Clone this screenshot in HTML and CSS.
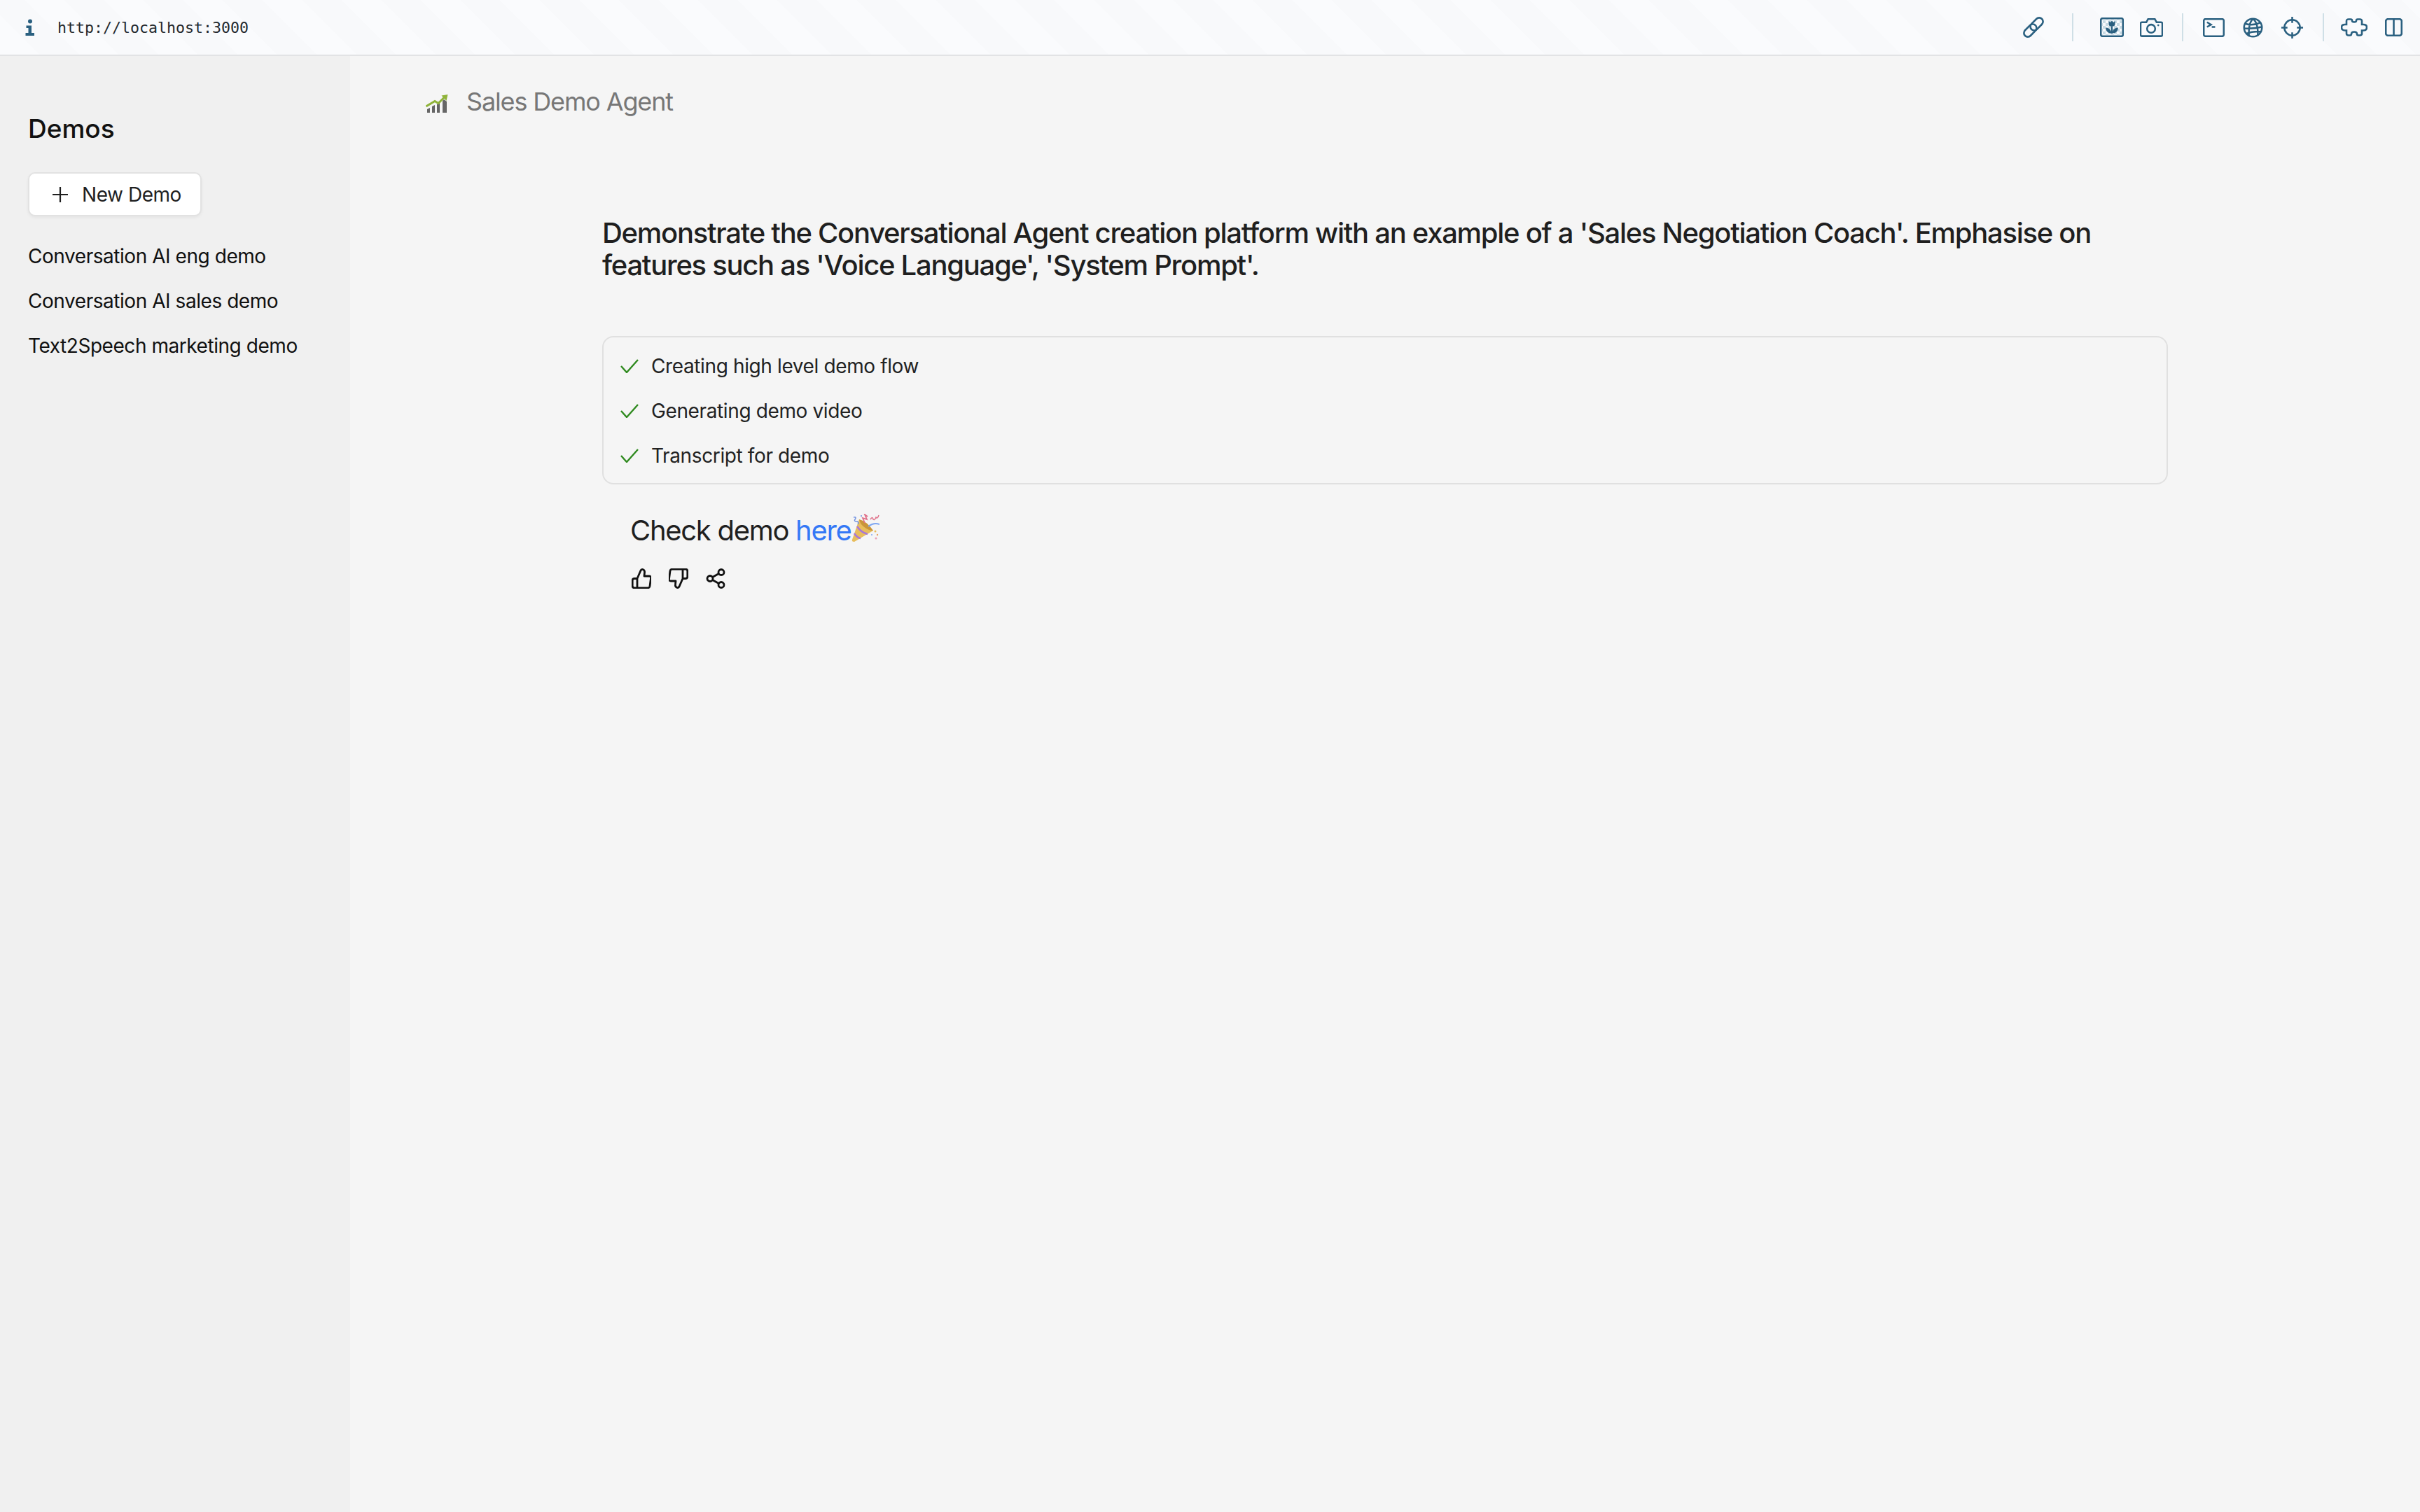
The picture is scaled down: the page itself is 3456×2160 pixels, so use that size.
FILE: index.html
```html
<!DOCTYPE html>
<html lang="en">
<head>
<meta charset="utf-8">
<title>Sales Demo Agent</title>
<link rel="stylesheet" href="styles.css">
</head>
<body>
<div class="toolbar">
  <svg class="info" viewBox="0 0 14 24"><circle cx="7" cy="3.5" r="3"/><path d="M1.5 9.5H9V20H13V24H0.5V20H4.5V13H1.5Z"/></svg>
  <span class="url">http://localhost:3000</span>
  <div class="tools">
    <span class="tool"><svg width="36" height="36" viewBox="0 0 36 36"><g transform="rotate(-45 18 18)"><rect x="1" y="12.500" width="21" height="11" rx="5.500"/><rect x="14" y="12.500" width="21" height="11" rx="5.500"/></g></svg></span>
    <span class="sep wide"></span>
    <span class="tool"><svg width="34" height="28" viewBox="0 0 34 28">
      <defs><pattern id="checker" width="8" height="8" patternUnits="userSpaceOnUse"><rect class="soft" width="4" height="4"/><rect class="soft" x="4" y="4" width="4" height="4"/></pattern></defs>
      <rect class="checker" x="3" y="3" width="28" height="22"/>
      <rect x="1.200" y="1.200" width="31.600" height="25.600" rx="2.500"/>
      <path class="fill" d="M12.500 5 L14.700 7 L17 4.500 L19.300 7 L21.500 5 V9.500 Q21.500 12.500 17 13 Q12.500 12.500 12.500 9.500Z"/>
      <path class="fill" d="M16 13H18V23H16ZM8 14.500Q14 14.500 16 20V22.500Q9 22.500 8 14.500ZM26 14.500Q20 14.500 18 20V22.500Q25 22.500 26 14.500Z"/>
    </svg></span>
    <span class="tool"><svg width="33" height="28" viewBox="0 0 34 28"><path d="M3 6.500H9.500L12 2H22L24.500 6.500H31Q33 6.500 33 8.500V25Q33 27 31 27H3Q1 27 1 25V8.500Q1 6.500 3 6.500Z"/><circle cx="16.500" cy="16" r="6"/><circle class="fill" cx="27" cy="11" r="1.400"/></svg></span>
    <span class="sep"></span>
    <span class="tool"><svg width="31" height="27" viewBox="0 0 32 28"><rect x="1.200" y="1.200" width="29.600" height="25.600" rx="2.500"/><path d="M6 6L12 9.500L6 13M13 13H18"/></svg></span>
    <span class="tool"><svg width="29" height="29" viewBox="0 0 30 30"><circle cx="15" cy="15" r="13.200"/><path d="M15 2Q8 8 9 28M15 2Q23 8 22 27M3 9Q15 13 27 7M2 16Q15 17 28 14M5 24Q15 20 27 21"/></svg></span>
    <span class="tool"><svg width="33" height="33" viewBox="0 0 34 34"><circle cx="17" cy="17" r="11.500"/><path d="M17 1V10M17 24V33M1 17H10M24 17H33"/></svg></span>
    <span class="sep"></span>
    <span class="tool"><svg width="38" height="26" viewBox="0 0 38 26"><path d="M8 9V4Q8 1.500 11 1.500H14Q16 1.500 16 3.500Q16 5.500 19 5.500Q22 5.500 22 3.500Q22 1.500 24 1.500H27Q30 1.500 30 4V9H32Q37 9 37 13Q37 17.500 32 17.500H30V22Q30 24.500 27 24.500H25Q23 24.500 23 22.500Q23 19.500 19 19.500Q15 19.500 15 22.500Q15 24.500 13 24.500H11Q8 24.500 8 22V17.500H6Q1 17.500 1 13Q1 9 6 9Z"/></svg></span>
    <span class="tool"><svg width="25" height="26" viewBox="0 0 25 26"><rect x="1.200" y="1.200" width="22.600" height="23.600" rx="3"/><path d="M12.500 1V25"/></svg></span>
  </div>
</div>
<div class="app">
  <aside class="sidebar">
    <h2 class="side-title">Demos</h2>
    <button class="new-demo" type="button">
      <svg class="plus" viewBox="0 0 24 24"><path d="M12 1V23M1 12H23"/></svg>
      New Demo
    </button>
    <ul class="demo-list">
      <li>Conversation AI eng demo</li>
      <li>Conversation AI sales demo</li>
      <li>Text2Speech marketing demo</li>
    </ul>
  </aside>
  <main class="main">
    <header class="header">
      <svg class="chart" viewBox="0 0 32 26">
        <path class="bar" d="M2 26V21L6 19V26ZM9 26V17L13 15V26ZM16 26V14L20 12V26ZM24 26V9L26 7L30 10V26Z"/>
        <path class="trend" d="M0.500 17L13 9.500L18 12.500L27 3.500"/>
        <path class="tip" d="M22.500 1.500L31.500 0L29.500 9Z"/>
      </svg>
      <span class="agent">Sales Demo Agent</span>
    </header>
    <section class="content">
      <p class="prompt">Demonstrate the Conversational Agent creation platform with an example of a 'Sales Negotiation Coach'. Emphasise on features such as 'Voice Language', 'System Prompt'.</p>
      <div class="steps">
        <div class="step"><svg class="check" viewBox="0 0 26 20"><path d="M1 10L9 19L25 1"/></svg>Creating high level demo flow</div>
        <div class="step"><svg class="check" viewBox="0 0 26 20"><path d="M1 10L9 19L25 1"/></svg>Generating demo video</div>
        <div class="step"><svg class="check" viewBox="0 0 26 20"><path d="M1 10L9 19L25 1"/></svg>Transcript for demo</div>
      </div>
      <p class="result">Check demo <a class="link" href="#">here</a><svg class="popper" viewBox="0 0 40 40">
        <path d="M1 37L11 8Q22 11 31 24L4 40Q0 40 1 37Z" fill="#e8bd5b"/>
        <path d="M11 8Q22 11 31 24Q24 24 17 18Q12 14 11 8Z" fill="#c9953a"/>
        <path d="M8 18Q14 27 23 29M4 28Q8 34 13 35" fill="none" stroke="#a877d6" stroke-width="2.500"/>
        <path d="M24 18Q32 12 40 15" fill="none" stroke="#7ea6f2" stroke-width="2"/>
        <path d="M3 5Q8 4 5 8Q3 11 8 11Q11 12 9 15" fill="none" stroke="#6e8fe0" stroke-width="1.500"/>
        <path d="M19 13L16 6L22 8L19 1L23 4" fill="none" stroke="#e0718a" stroke-width="1.800"/>
        <path d="M27 8Q30 3 31 8Q33 10 35 5Q37 8 39 2" fill="none" stroke="#e0718a" stroke-width="1.500"/>
        <circle cx="34" cy="25" r="1.500" fill="#e8bd5b"/><circle cx="37" cy="30" r="1.200" fill="#e9a05c"/><circle cx="35" cy="35" r="1.500" fill="#e8a0b8"/><circle cx="29" cy="30" r="1" fill="#7ea6f2"/><circle cx="14" cy="3" r="1" fill="#6e8fe0"/>
      </svg></p>
      <div class="actions">
        <svg class="act" viewBox="0 0 28 29"><path d="M8 14.500L13 3Q14 1.200 16 1.500Q19 2.500 18.500 6L18 11H25Q28 11 27.500 14L26 25.500Q25.500 27.800 23 27.800H4Q1.200 27.800 1.200 25V17.300Q1.200 14.500 4 14.500H8V27.800"/></svg>
        <svg class="act" viewBox="0 0 28 29"><g transform="rotate(180 14 14.500)"><path d="M8 14.500L13 3Q14 1.200 16 1.500Q19 2.500 18.500 6L18 11H25Q28 11 27.500 14L26 25.500Q25.500 27.800 23 27.800H4Q1.200 27.800 1.200 25V17.300Q1.200 14.500 4 14.500H8V27.800"/></g></svg>
        <svg class="act" viewBox="0 0 28 29"><circle cx="22" cy="5.500" r="4"/><circle cx="6" cy="14.500" r="4"/><circle cx="22" cy="23.500" r="4"/><path d="M9.500 12.500L18.500 7.500M9.500 16.500L18.500 21.500"/></svg>
      </div>
    </section>
  </main>
</div>
</body>
</html>
```
FILE: styles.css
```css
* { box-sizing: border-box; }
html, body { margin: 0; height: 100%; }
body {
  font-family: Inter, "Liberation Sans", sans-serif;
  background: #f5f5f5;
  color: #1f1f1f;
  display: flex;
  flex-direction: column;
  min-height: 2160px;
}
.toolbar {
  height: 80px;
  flex: none;
  display: flex;
  align-items: center;
  padding: 0 18px 0 36px;
  border-bottom: 2px solid #e2e3e5;
  background: repeating-linear-gradient(45deg, #fafbfd 0 40px, #f8f9fb 40px 80px);
}
.info { width: 14px; height: 24px; fill: #2a6080; }
.url {
  font-family: "DejaVu Sans Mono", monospace;
  font-size: 21.600px;
  line-height: 30px;
  margin-top: 2px;
  color: #24292e;
  margin-left: 32px;
}
.tools { margin-left: auto; display: flex; align-items: center; gap: 16px; }
.tool { width: 40px; height: 40px; display: flex; align-items: center; justify-content: center; }
.tool svg { flex: none; fill: none; stroke: #2a6080; stroke-width: 2.600; }
.tool .fill { fill: #2a6080; stroke: none; }
.tool .soft { fill: #c8dbe4; stroke: none; }
.tool .checker { fill: url(#checker); stroke: none; }
.sep { width: 2px; height: 40px; background: #cfdfe6; margin: 0 7px 0 8px; }
.sep.wide { margin: 0 19px; }
.app { flex: 1; display: flex; min-height: 0; }
.sidebar { width: 500px; flex: none; background: #f0f0f0; padding: 80px 40px 0; }
.side-title { margin: 0; font-size: 37px; line-height: 48px; font-weight: 500; color: #111; }
.new-demo {
  display: flex;
  align-items: center;
  gap: 19px;
  margin-top: 38px;
  width: 248px;
  height: 63px;
  padding: 0 0 0 32px;
  background: #fff;
  border: 2px solid #e2e2e2;
  border-radius: 10px;
  box-shadow: 0 2px 4px rgba(0, 0, 0, .05);
  font: 400 28px Inter, "Liberation Sans", sans-serif;
  letter-spacing: -0.450px;
  color: #1f1f1f;
}
.plus { width: 24px; height: 24px; flex: none; fill: none; stroke: #1f1f1f; stroke-width: 2.200; }
.demo-list { list-style: none; margin: 25px 0 0; padding: 0; }
.demo-list li { height: 64px; line-height: 64px; font-size: 28px; letter-spacing: -0.450px; color: #111; white-space: nowrap; }
.main { flex: 1; min-width: 0; }
.header { display: flex; align-items: center; gap: 26px; height: 50px; margin: 40px 0 0 108px; }
.chart { width: 32px; height: 26px; margin-top: 6px; }
.chart .bar { fill: #666; }
.chart .trend { fill: none; stroke: #8fb339; stroke-width: 3; }
.chart .tip { fill: #8fb339; }
.agent { font-size: 36px; letter-spacing: -1.150px; color: #777; }
.content { width: 2236px; margin: 140px 0 0 360px; }
.prompt { margin: 0; font-size: 40px; line-height: 46px; font-weight: 450; letter-spacing: -1.280px; color: #1f1f1f; }
.steps {
  margin-top: 78px;
  height: 212px;
  padding: 9px 0 0 24px;
  border: 2px solid #e0e0e0;
  border-radius: 16px;
}
.step { display: flex; align-items: center; gap: 18px; height: 64px; font-size: 28px; letter-spacing: -0.380px; color: #222; }
.check { width: 26px; height: 20px; fill: none; stroke: #2f8a1f; stroke-width: 2.400; }
.result { display: flex; align-items: center; margin: 42px 0 0 40px; font-size: 40px; line-height: 48px; letter-spacing: -1.300px; color: #1f1f1f; white-space: pre; }
.link { color: #3478f6; text-decoration: none; }
.popper { width: 40px; height: 40px; margin-top: -8px; }
.actions { display: flex; gap: 25px; margin: 30px 0 0 42px; }
.act { width: 28px; height: 29px; fill: none; stroke: #111; stroke-width: 2.800; stroke-linejoin: round; }
```
